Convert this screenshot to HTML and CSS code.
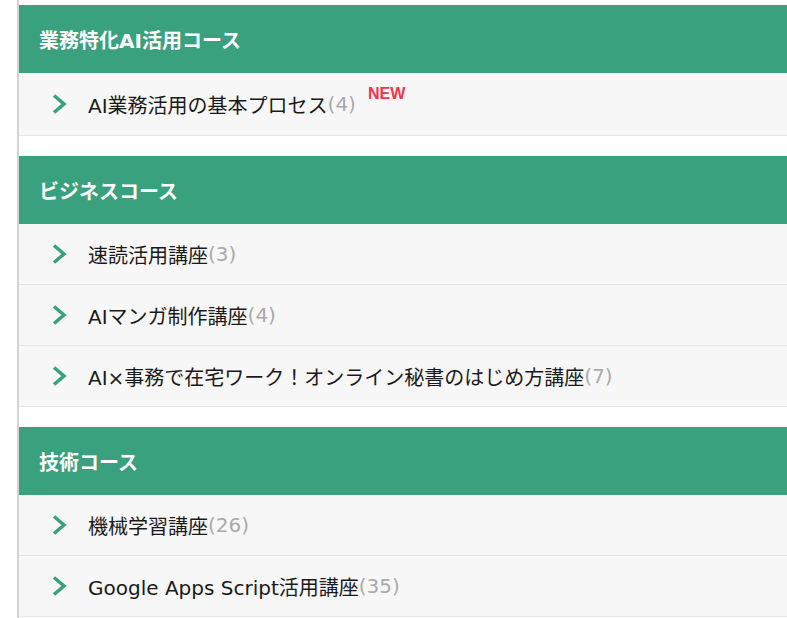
FILE: index.html
```html
<!DOCTYPE html>
<html lang="ja">
<head>
  <meta charset="UTF-8" />
  <title>コース一覧</title>
  <link rel="stylesheet" href="styles.css">
</head>
<body>
  <main class="courses">

    <section class="course">
      <h2 class="course-title">業務特化AI活用コース</h2>
      <ul class="course-list">
        <li class="has-new"><a href="#"><svg class="chev" viewBox="0 0 15 20"><polyline points="2,1.5 12,10 2,18.5" /></svg>AI業務活用の基本プロセス<span class="count">(4)</span><span class="new">NEW</span></a></li>
      </ul>
    </section>

    <section class="course">
      <h2 class="course-title">ビジネスコース</h2>
      <ul class="course-list">
        <li><a href="#"><svg class="chev" viewBox="0 0 15 20"><polyline points="2,1.5 12,10 2,18.5" /></svg>速読活用講座<span class="count">(3)</span></a></li>
        <li><a href="#"><svg class="chev" viewBox="0 0 15 20"><polyline points="2,1.5 12,10 2,18.5" /></svg>AIマンガ制作講座<span class="count">(4)</span></a></li>
        <li><a href="#"><svg class="chev" viewBox="0 0 15 20"><polyline points="2,1.5 12,10 2,18.5" /></svg>AI×事務で在宅ワーク！オンライン秘書のはじめ方講座<span class="count">(7)</span></a></li>
      </ul>
    </section>

    <section class="course">
      <h2 class="course-title">技術コース</h2>
      <ul class="course-list">
        <li><a href="#"><svg class="chev" viewBox="0 0 15 20"><polyline points="2,1.5 12,10 2,18.5" /></svg>機械学習講座<span class="count">(26)</span></a></li>
        <li><a href="#"><svg class="chev" viewBox="0 0 15 20"><polyline points="2,1.5 12,10 2,18.5" /></svg>Google Apps Script活用講座<span class="count">(35)</span></a></li>
      </ul>
    </section>

  </main>
</body>
</html>
```

FILE: styles.css
```css
body {
  margin: 0;
  background: #fff;
  font-family: 'DejaVu Sans', 'Noto Sans CJK JP', sans-serif;
  color: #1a1a1a;
}

.courses {
  margin-left: 17px;
  padding-top: 5px;
  border-left: 2px solid #d4d4d4;
  min-height: 618px;
  box-sizing: border-box;
}

.course {
  margin-bottom: 20px;
}

.course-title {
  margin: 0;
  height: 68px;
  display: flex;
  align-items: center;
  padding-left: 20px;
  background-color: #39a17d;
  color: #fff;
  font-size: 20px;
  font-weight: bold;
}

.course-list {
  list-style: none;
  margin: 0;
  padding: 0;
}

.course-list li {
  background: #f7f7f7;
  border-bottom: 1px solid #e6e6e6;
}

.course-list a {
  display: flex;
  align-items: center;
  height: 60px;
  padding-left: 33px;
  color: #1a1a1a;
  text-decoration: none;
  font-size: 20px;
}

.course-list .has-new a {
  height: 62px;
}

.chev {
  width: 15px;
  height: 20px;
  margin-right: 21px;
  flex-shrink: 0;
  fill: none;
  stroke: #39a17d;
  stroke-width: 3.5;
}

.count {
  color: #aaa;
}

.new {
  align-self: flex-start;
  margin-top: 12px;
  margin-left: 12px;
  color: #f3344b;
  font-size: 16px;
  font-weight: bold;
  font-family: 'Liberation Sans', sans-serif;
}
```
